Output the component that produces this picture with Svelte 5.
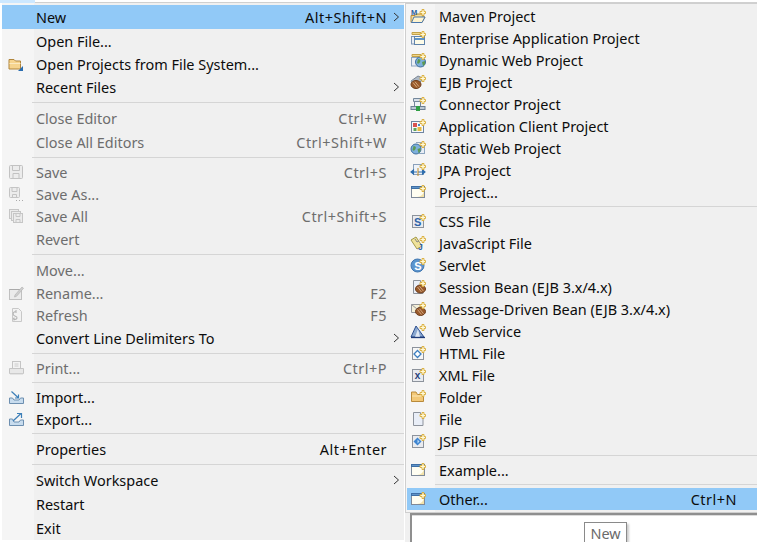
<script>
  const spark = `<path d="M12 1.500h2v2h1.500v2h-1.500v2h-2v-2h-2v-2h2z" fill="#fff9d8" stroke="#d9ab38" stroke-width="0.9" stroke-linejoin="round"/>`;
  const win = `<rect x="1.500" y="2.500" width="13" height="11" fill="#fffef2" stroke="#7f8a99"/><rect x="1.500" y="2.500" width="13" height="2" fill="#5f94c8" stroke="#3f6fa5"/><path d="M14 6c0 4-3 7-7 7h7z" fill="#f3e2a8"/>`;
  const beanAt = (x, y) => `<g transform="translate(${x} ${y})"><ellipse cx="0" cy="0" rx="5" ry="4" fill="#9a5a2c" stroke="#6d3c1a"/><path d="M-3-2l4 5M-1-2.800l4 5" stroke="#e2bd93" stroke-width="0.8"/></g>`;
  const globe = `<circle cx="7.500" cy="10" r="5" fill="#7db0dc" stroke="#3f6f9f"/><path d="M5 7c2 0 3 1 2 3s-2 2-3 1zM9 10l3-1 0 3-2 2z" fill="#5d9a52"/>`;
  const doc = `<path d="M3.500 1.500h7v2h2.500v11h-9.500z" fill="#e9eef7" stroke="#8d939c"/>`;
  const icons = {
    openfs: `<path d="M1 3.500h5l1.500 1.500h5v8h-11.500z" fill="#f6d48e" stroke="#b0853c"/><path d="M1.500 7h11v1h-11z" fill="#fbe9c0"/><path d="M15 10v5h-5z" fill="#2a6db0"/>`,
    save: `<g fill="none" stroke="#c2c2c2"><rect x="1.500" y="1.500" width="13" height="13" rx="1" fill="#ececec"/><path d="M4.500 1.500v5h7v-5M5 14.500v-5h6v5"/></g>`,
    saveas: `<g fill="none" stroke="#c4c4c4"><rect x="1.500" y="1.500" width="10" height="10" rx="1" fill="#ececec"/><path d="M4 1.500v4h5v-4M4.500 11.500v-3h4v3"/></g><path d="M8 14.500h1M11 14.500h1M14 14.500h1" stroke="#aaa"/>`,
    saveall: `<g stroke="#c6c6c6" fill="#ececec"><rect x="1.500" y="1.500" width="9" height="9"/><rect x="3.500" y="3.500" width="9" height="9"/><rect x="5.500" y="5.500" width="9" height="9"/><path d="M8 14.500v-3h4v3M8 5.500v3h4v-3" fill="none"/></g>`,
    rename: `<rect x="1.500" y="4.500" width="12" height="10" fill="#ebebeb" stroke="#c0c0c0"/><path d="M1.500 4.500h12" stroke="#aaa"/><path d="M7 10l7-8 1.500 1.300-7 8-2 .7z" fill="#cfcfcf" stroke="#b4b4b4" stroke-width=".7"/>`,
    refresh: `<path d="M4.500 1.500h6l3 3v10h-9z" fill="#f2f2f2" stroke="#c8c8c8"/><path d="M8.500 4.500c-3 0-4 2-3 3.500s4 1 3.500 3-3 1.500-4 .5M8 3v3M6 10.500v3" fill="none" stroke="#b5b5b5" stroke-width="1.100"/>`,
    print: `<rect x="4.500" y="1.500" width="8" height="7" fill="#f3f3f3" stroke="#c5c5c5"/><path d="M6.500 4h4M6.500 6h4" stroke="#ccc"/><path d="M1.500 8.500h14v5h-14z" fill="#e8e8e8" stroke="#c5c5c5"/><path d="M2 13.500h13v1h-13z" fill="#d2d2d2"/>`,
    importi: `<path d="M1.500 9v5.500h14v-5.500h-3l-1.500 2h-5l-1.500-2z" fill="#c8dcee" stroke="#6d8fb0"/><path d="M3.500 2.500l6.500 6M10.500 5.500v3.500h-3.500" fill="none" stroke="#3d7fb8" stroke-width="1.200"/>`,
    exporti: `<path d="M1.500 8v6.500h14v-5.500h-3l-1.500 2h-5l-1.500-3z" fill="#c8dcee" stroke="#6d8fb0"/><path d="M5 10l8-7.500M9 2.500h4.500v4.500" fill="none" stroke="#3d7fb8" stroke-width="1.200"/>`,
    maven: `<path d="M1 7.500h4l1-1.500h7v3h2l-3 5.500h-11z" fill="#f7dc96" stroke="#b48a3c"/><path d="M4 9h11l-3 5.500h-10.500z" fill="#fdf3cf" stroke="#4a78ad"/><text x="1" y="6.500" font-family="Liberation Sans" font-size="7.500" font-weight="bold" fill="#2a5f9e">M</text>` + spark,
    ear: `<path d="M2 2.500h9v2h-9z" fill="#f0d68a" stroke="#c4a249"/><rect x="1.500" y="6.500" width="3" height="7.500" fill="#e9eef5" stroke="#7f97b5"/><rect x="4.500" y="6.500" width="10" height="8" fill="#fdfbe8" stroke="#5f83ab"/><path d="M5 9h9" stroke="#5f94c8" stroke-width="2"/>` + spark,
    web: `<path d="M2 2.500h9v2h-9z" fill="#f0d68a" stroke="#c4a249"/><rect x="1.500" y="5.500" width="12" height="8.500" fill="#e9eef5" stroke="#8ea6c0"/><g transform="translate(3 0)">${globe}</g>` + spark,
    ejb: `<path d="M1 7l7-5 4.500 2-1 3-8 4z" fill="#aeb9c6" stroke="#7b8794"/>` + beanAt(6, 10.5) + spark,
    conn: `<path d="M3.500 2.500h8v3h-8z" fill="#d6dfe9" stroke="#74879b"/><path d="M4.500 5.500h6v5h-6z" fill="#eef2f6" stroke="#74879b"/><rect x="1" y="10.500" width="14" height="3" fill="#bcc8d4" stroke="#6b7f93"/><rect x="6" y="10" width="4" height="5" fill="#2f9e44"/>` + spark,
    appc: `<rect x="1.500" y="3.500" width="12" height="11" fill="#f7f9fc" stroke="#6f85a0"/><rect x="3" y="5" width="4" height="4" fill="#d9534f"/><rect x="7.500" y="9" width="4" height="4" fill="#e7b93f"/><rect x="3.500" y="10" width="3" height="3" fill="#5fa55a"/><rect x="8" y="6" width="2" height="2" fill="#4c82c0"/>` + spark,
    stat: `<path d="M6 2.500h6v5" fill="none" stroke="#98a8bb"/><rect x="9.500" y="6.500" width="5" height="7" fill="#e9eef5" stroke="#8ea6c0"/><g transform="translate(-1.500 -1)">${globe}</g>` + spark,
    jpa: `<rect x="3.500" y="2.500" width="10" height="10" fill="#eef3f9" stroke="#8aa0ba"/><path d="M1 10h6M1 10l2.500-2v4zM8 10h7M15 10l-2.500-2v4z" stroke="#2f6eae" fill="#2f6eae" stroke-width="1.100"/><path d="M8 6v8" stroke="#c58a20"/>` + spark,
    proj: win + spark,
    css: `<rect x="2.500" y="2.500" width="11" height="12" fill="#e9ebef" stroke="#8d939c"/><text x="4" y="12.500" font-family="Liberation Sans" font-size="11" font-weight="bold" fill="#2f63a8">S</text>` + spark,
    js: `<path d="M1 5l5-3 6 9-5 3z" fill="#efe29a" stroke="#a39a4d"/><path d="M5 4l2 3 2-1" stroke="#888" fill="none"/><text x="8" y="15" font-family="Liberation Sans" font-size="8.500" font-weight="bold" fill="#2f63a8">J</text>` + spark,
    servlet: `<circle cx="7.500" cy="8.500" r="6.500" fill="#5b94cd" stroke="#3f76b0"/><text x="4.200" y="12.500" font-family="Liberation Sans" font-size="11" font-weight="bold" fill="#fff">S</text>` + spark,
    session: doc + beanAt(10.5, 10) + spark,
    mdb: `<path d="M1.500 3.500h11v8h-11z" fill="#f5f0d8" stroke="#96989c"/><path d="M1.500 3.500l5.500 4.500 5.500-4.500" fill="none" stroke="#96989c"/>` + beanAt(10.5, 10.5) + spark,
    ws: `<path d="M1 14l5-11 8 11z" fill="#8aa8d0" stroke="#2d4f8f"/><path d="M5 14l3-8 2 8" fill="#dfe8f4"/><path d="M1 14.500h14" stroke="#1e3a78" stroke-width="1.300"/>` + spark,
    html: `<rect x="2.500" y="2.500" width="11" height="12" fill="#f7f7f7" stroke="#8d939c"/><path d="M7.500 5.500l3.500 3.500-3.500 3.500-3.500-3.500z" fill="#fff" stroke="#3d7fc0" stroke-width="1.300"/>` + spark,
    xml: `<rect x="2.500" y="2.500" width="11" height="12" fill="#e9ebef" stroke="#8d939c"/><text x="4.500" y="12" font-family="Liberation Mono" font-size="10" font-weight="bold" fill="#27407a">x</text>` + spark,
    folder: `<path d="M1.500 3v9.500h12v-7h-6l-1.500-2.500z" fill="#f3c877" stroke="#b98a3a"/><path d="M2 7h11" stroke="#fbe7b8"/>` + spark,
    file: doc + spark,
    jsp: `<rect x="2.500" y="2.500" width="11" height="12" fill="#e9ebef" stroke="#8d939c"/><path d="M7.500 4.500l4 4-4 4-4-4z" fill="#3d84d0"/><path d="M7.500 6.500l2 2-2 2z" fill="#bcd9f5"/>` + spark
  };

  const left = [
    { t: 'New', k: 'Alt+Shift+N', sub: 1, hi: 1 },
    { t: 'Open File...' },
    { t: 'Open Projects from File System...', i: 'openfs' },
    { t: 'Recent Files', sub: 1 },
    { sep: 1 },
    { t: 'Close Editor', k: 'Ctrl+W', off: 1 },
    { t: 'Close All Editors', k: 'Ctrl+Shift+W', off: 1 },
    { sep: 1 },
    { t: 'Save', k: 'Ctrl+S', off: 1, i: 'save' },
    { t: 'Save As...', off: 1, i: 'saveas' },
    { t: 'Save All', k: 'Ctrl+Shift+S', off: 1, i: 'saveall' },
    { t: 'Revert', off: 1 },
    { sep: 1 },
    { t: 'Move...', off: 1 },
    { t: 'Rename...', k: 'F2', off: 1, i: 'rename' },
    { t: 'Refresh', k: 'F5', off: 1, i: 'refresh' },
    { t: 'Convert Line Delimiters To', sub: 1 },
    { sep: 1 },
    { t: 'Print...', k: 'Ctrl+P', off: 1, i: 'print' },
    { sep: 1 },
    { t: 'Import...', i: 'importi' },
    { t: 'Export...', i: 'exporti' },
    { sep: 1 },
    { t: 'Properties', k: 'Alt+Enter' },
    { sep: 1 },
    { t: 'Switch Workspace', sub: 1 },
    { t: 'Restart' },
    { t: 'Exit' }
  ];
  const right = [
    { t: 'Maven Project', i: 'maven' },
    { t: 'Enterprise Application Project', i: 'ear' },
    { t: 'Dynamic Web Project', i: 'web' },
    { t: 'EJB Project', i: 'ejb' },
    { t: 'Connector Project', i: 'conn' },
    { t: 'Application Client Project', i: 'appc' },
    { t: 'Static Web Project', i: 'stat' },
    { t: 'JPA Project', i: 'jpa' },
    { t: 'Project...', i: 'proj' },
    { sep: 1 },
    { t: 'CSS File', i: 'css' },
    { t: 'JavaScript File', i: 'js' },
    { t: 'Servlet', i: 'servlet' },
    { t: 'Session Bean (EJB 3.x/4.x)', i: 'session' },
    { t: 'Message-Driven Bean (EJB 3.x/4.x)', i: 'mdb' },
    { t: 'Web Service', i: 'ws' },
    { t: 'HTML File', i: 'html' },
    { t: 'XML File', i: 'xml' },
    { t: 'Folder', i: 'folder' },
    { t: 'File', i: 'file' },
    { t: 'JSP File', i: 'jsp' },
    { sep: 1 },
    { t: 'Example...', i: 'proj' },
    { sep: 1 },
    { t: 'Other...', k: 'Ctrl+N', i: 'proj', hi: 1 }
  ];
</script>

{#snippet menu(items)}
  {#each items as it}
    {#if it.sep}
      <div class="sep"></div>
    {:else}
      <div class="row" class:hi={it.hi} class:off={it.off} class:tall={!it.i}>
        <span class="gut">
          {#if it.i}<svg width="16" height="16" viewBox="0 0 16 16">{@html icons[it.i]}</svg>{/if}
        </span>
        <span class="label">{it.t}</span>
        {#if it.k}<span class="key">{it.k}</span>{/if}
        <span class="arrow">
          {#if it.sub}<svg width="7" height="10" viewBox="0 0 7 10"><path d="M1 1l4.500 4-4.500 4" fill="none" stroke="#333" stroke-width="1"/></svg>{/if}
        </span>
      </div>
    {/if}
  {/each}
{/snippet}

<div class="page">
  <div class="strip"><span class="tab"></span></div>
  <div class="cols">
    <div class="menu main">{@render menu(left)}</div>
    <div class="side">
      <div class="menu subm">{@render menu(right)}</div>
      <div class="under">
        <div class="pane"></div>
      </div>
    </div>
  </div>
  <div class="tip">New</div>
</div>

<style>
  :global(body) { margin: 0; background: #fff; }
  .page {
    position: relative;
    width: 757px;
    height: 542px;
    overflow: hidden;
    background: #fff;
    font: 14.45px/22px "Noto Sans", "Open Sans", sans-serif;
    color: #0c0c0c;
  }
  .strip { display: flex; height: 2px; border-bottom: 1px solid #d0d0d0; }
  .tab { width: 35px; height: 3px; background: #cde8ff; }
  .cols { display: flex; align-items: flex-start; }
  .menu { background: linear-gradient(to right, #f5f5f5 32px, #f0f0f0 32px); }
  .main { width: 402px; margin-left: 2px; padding: 2px 0 0; }
  .side { flex: 1; min-width: 0; margin-left: 1px; }
  .subm {
    border: 1px solid #cfcfcf;
    border-width: 1px 0 1px 1px;
    padding: 1px 0 2px 1px;
    background: linear-gradient(to right, #f5f5f5 29px, #f0f0f0 29px);
  }
  .row { display: flex; align-items: center; height: 22px; white-space: nowrap; }
  .main .tall { height: 24px; }
  .hi { background: #91c9f7; }
  .off { color: #6d6d6d; }
  .gut { width: 34px; flex: none; display: flex; align-items: center; padding-left: 6px; box-sizing: border-box; }
  .subm .gut { width: 32px; padding-left: 3px; }
  .gut svg { display: block; }
  .label { flex: 1; min-width: 0; padding-top: 2px; }
  .key { flex: none; letter-spacing: 0.5px; padding-top: 2px; }
  .arrow { width: 17px; flex: none; display: flex; align-items: center; justify-content: center; padding-left: 2px; box-sizing: border-box; }
  .subm .arrow { width: 20px; }
  .sep { height: 7px; padding-top: 3px; box-sizing: border-box; }
  .sep::before { content: ""; display: block; height: 1px; margin-left: 30px; background: #d5d5d5; }
  .subm .sep::before { margin-left: 28px; }
  .under { height: 40px; padding-left: 5px; background: #f0f0f0; }
  .pane { height: 40px; background: #fff; border: 0 solid #8f8f8f; border-width: 2px 0 0 2px; box-shadow: inset 0 1px #dcdcdc; }
  .tip {
    position: absolute;
    left: 584px;
    top: 522px;
    box-sizing: border-box;
    width: 43px;
    height: 20px;
    padding-top: 2px;
    border: 1px solid #8a8a8a;
    border-bottom: 0;
    background: #fff;
    color: #6a6a6a;
    text-align: center;
    line-height: 18px;
    box-shadow: 2px 2px 2px #ccc;
  }
</style>
